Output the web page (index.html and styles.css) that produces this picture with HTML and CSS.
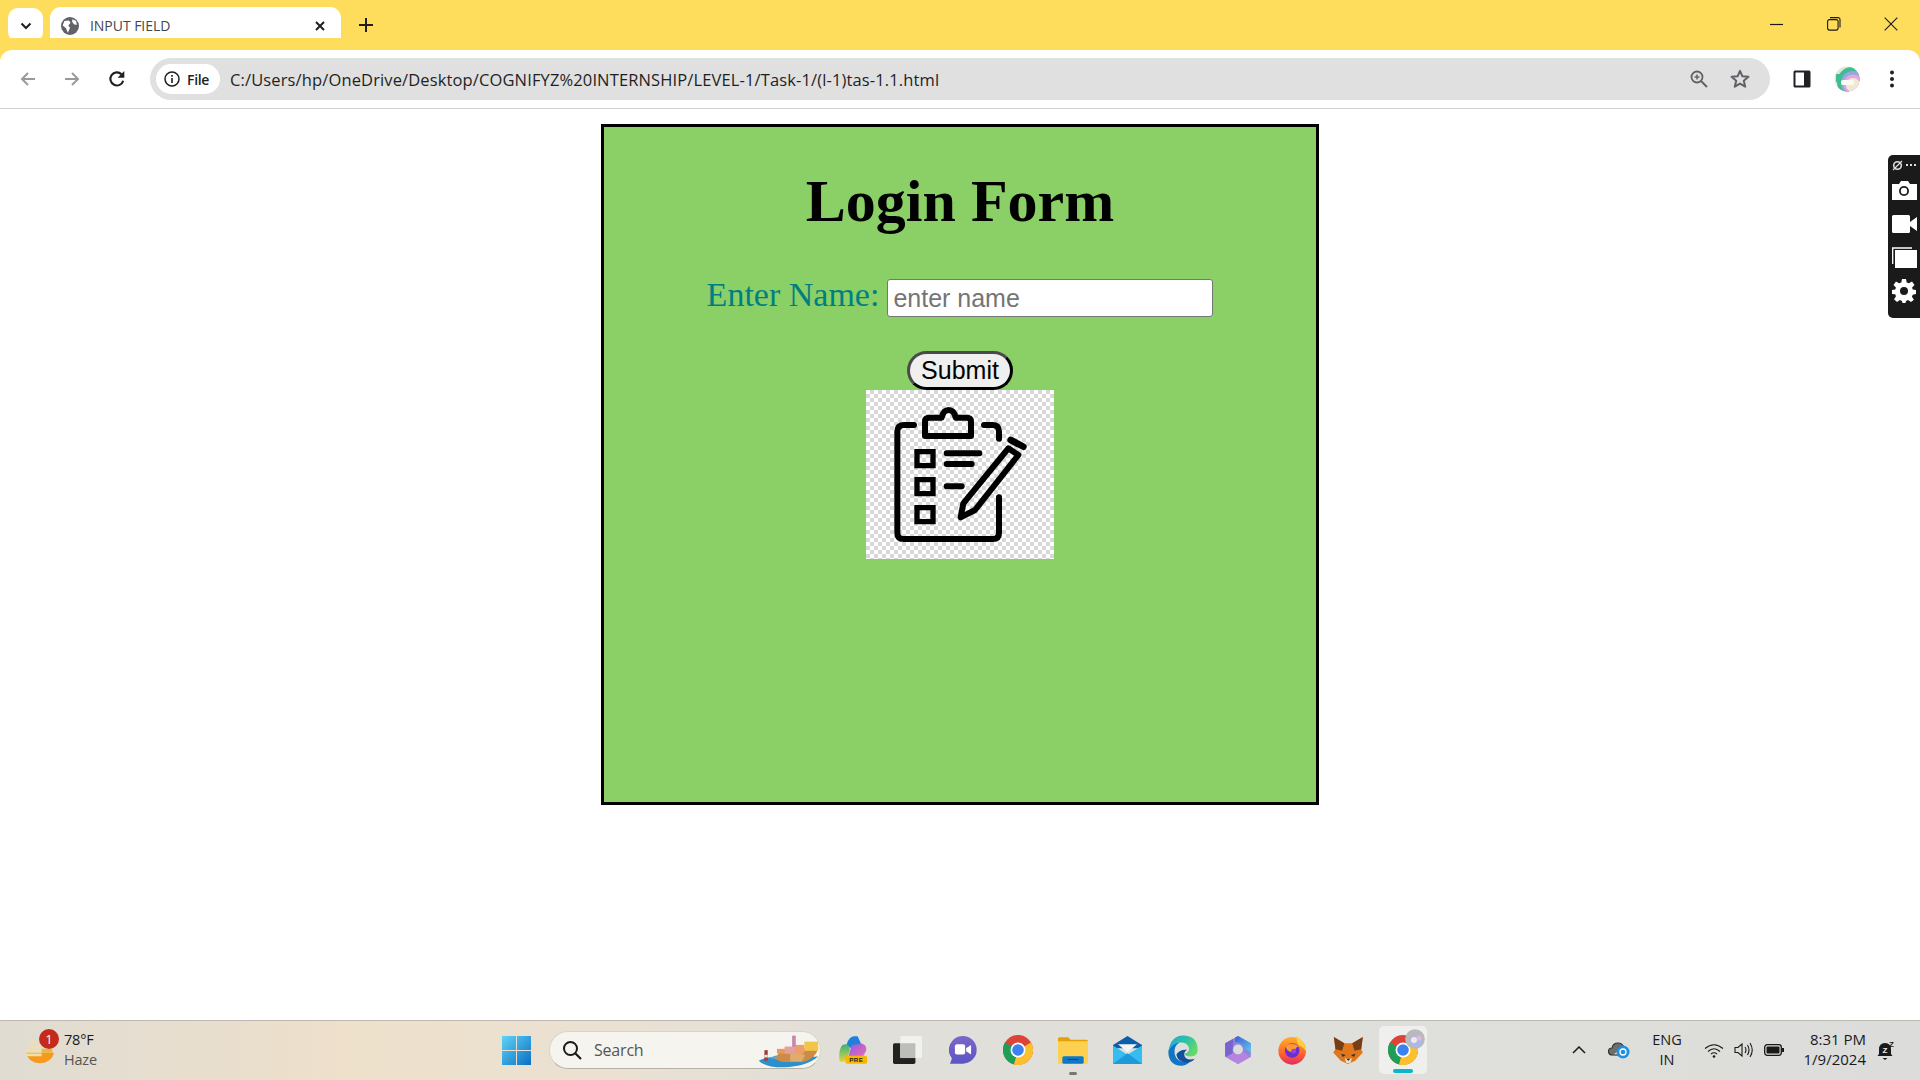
FILE: index.html
```html
<!DOCTYPE html>
<html lang="en">
<head>
<meta charset="utf-8">
<title>INPUT FIELD</title>
<link rel="stylesheet" href="styles.css">
</head>
<body>
<div class="screen">
  <header class="tabstrip">
    <button class="tab-search"><svg width="12" height="8" viewBox="0 0 12 8"><path d="M1.500 1.500 6 6l4.500-4.500" fill="none" stroke="#1f1f1f" stroke-width="2"/></svg></button>
    <div class="tab">
      <svg class="favicon" width="18" height="18" viewBox="0 0 16 16"><circle cx="8" cy="8" r="8" fill="#5f6368"/><path d="M3 3.500 7 3l1.500 2L6.500 7.500 8 9.500l-1 2.500-1 2L4.500 10 1.500 7.500zM10 2l3.500 1.500L14 7l-2.500-.5L10 4.500z" fill="#fff"/></svg>
      <span class="tab-title">INPUT FIELD</span>
      <svg class="tab-close" width="10" height="10" viewBox="0 0 10 10"><path d="M1 1l8 8M9 1l-8 8" stroke="#1f1f1f" stroke-width="2"/></svg>
    </div>
    <svg class="new-tab" width="14" height="14" viewBox="0 0 14 14"><path d="M7 0v14M0 7h14" stroke="#1f1f1f" stroke-width="2"/></svg>
    <div class="win-controls">
      <svg width="14" height="14" viewBox="0 0 14 14"><path d="M0 7.500h13" stroke="#1a1a1a" stroke-width="1.200"/></svg>
      <svg width="14" height="14" viewBox="0 0 14 14"><rect x=".6" y="2.600" width="10.500" height="10.500" rx="2" fill="none" stroke="#1a1a1a" stroke-width="1.100"/><path d="M3 .6h8a2 2 0 0 1 2 2v8" fill="none" stroke="#1a1a1a" stroke-width="1.100"/></svg>
      <svg width="14" height="14" viewBox="0 0 14 14"><path d="M.7.700l12.600 12.600M13.300.700.700 13.300" stroke="#1a1a1a" stroke-width="1.100"/></svg>
    </div>
  </header>

  <nav class="toolbar">
    <div class="nav-buttons">
      <svg width="16" height="16" viewBox="0 0 16 16"><path d="M15 8H2M8 2 2 8l6 6" fill="none" stroke="#9a9a9a" stroke-width="2"/></svg>
      <svg width="16" height="16" viewBox="0 0 16 16"><path d="M1 8h13M8 2l6 6-6 6" fill="none" stroke="#9a9a9a" stroke-width="2"/></svg>
      <svg width="18" height="18" viewBox="0 0 16 16"><path d="M13.500 9.500A5.800 5.800 0 1 1 12 3.800" fill="none" stroke="#1f1f1f" stroke-width="1.900"/><path d="M14.500 .8v6h-6z" fill="#1f1f1f"/></svg>
    </div>
    <div class="omnibox">
      <div class="chip">
        <svg width="16" height="16" viewBox="0 0 16 16"><circle cx="8" cy="8" r="7" fill="none" stroke="#1f1f1f" stroke-width="1.500"/><path d="M8 7v5M8 4v1.800" stroke="#1f1f1f" stroke-width="1.600"/></svg>
        <span class="chip-label">File</span>
      </div>
      <span class="url">C:/Users/hp/OneDrive/Desktop/COGNIFYZ%20INTERNSHIP/LEVEL-1/Task-1/(l-1)tas-1.1.html</span>
      <svg class="omni-zoom" width="18" height="18" viewBox="0 0 18 18"><circle cx="7" cy="7" r="5.500" fill="none" stroke="#5f6368" stroke-width="1.800"/><path d="M11 11l6 6" stroke="#5f6368" stroke-width="2"/><path d="M7 4.500v5M4.500 7h5" stroke="#5f6368" stroke-width="1.500"/></svg>
      <svg class="omni-star" width="20" height="20" viewBox="0 0 20 20"><path d="M10 1.800l2.400 5.500 6 .5-4.600 4 1.400 5.900-5.200-3.100-5.200 3.100 1.400-5.900-4.600-4 6-.5z" fill="none" stroke="#5f6368" stroke-width="2" stroke-linejoin="round"/></svg>
    </div>
    <div class="tool-right">
      <svg class="tool-panel" width="18" height="18" viewBox="0 0 18 18"><rect x=".5" y=".5" width="17" height="17" rx="1.500" fill="#202124"/><rect x="2.500" y="2.500" width="8.500" height="13" fill="#fff"/></svg>
      <svg class="tool-avatar" width="26" height="26" viewBox="0 0 26 26"><defs><clipPath id="av"><circle cx="13" cy="13" r="12.500"/></clipPath></defs><g clip-path="url(#av)"><rect width="26" height="26" fill="#e3e3e0"/><circle cx="18" cy="16" r="15" fill="#3fbe8e"/><circle cx="19" cy="17" r="12" fill="#9aa5e8"/><circle cx="19" cy="18" r="9.500" fill="#e6a8d8"/><circle cx="19" cy="19" r="7" fill="#f1ead2"/><rect x="7" y="14" width="13" height="5" rx="2" fill="#fbfaf5"/><rect x="2" y="8" width="4" height="8" fill="#3fbe8e"/></g></svg>
      <svg class="tool-menu" width="6" height="18" viewBox="0 0 6 18"><circle cx="3" cy="2.500" r="2" fill="#202124"/><circle cx="3" cy="9" r="2" fill="#202124"/><circle cx="3" cy="15.500" r="2" fill="#202124"/></svg>
    </div>
  </nav>

  <main class="page">
    <section class="card">
      <h1 class="card-title">Login Form</h1>
      <form class="login-form">
        <p class="name-row"><label class="name-label" for="name">Enter Name:</label><input class="name-input" id="name" type="text" placeholder="enter name"></p>
        <button class="submit" type="button">Submit</button>
        <div class="art">
          <svg class="art-icon" viewBox="78 150 564 507" fill="none" stroke="#000" stroke-width="18" stroke-linecap="round" stroke-linejoin="round">
            <path d="M222 255H192Q172 255 172 275V578Q172 597 192 597H458Q477 597 477 578V472"/>
            <path d="M432 255H458Q477 255 477 275V296"/>
            <path d="M255 288V245Q255 233 268 233H305Q310 210 326 210Q342 210 347 233H380Q393 233 393 245V288Z"/>
            <path d="M231 335H279V377H231ZM231 419H279V461H231ZM231 503H279V545H231Z" stroke-width="16" stroke-linecap="butt" stroke-linejoin="miter"/>
            <path d="M320 340H418M320 372H395M320 439H365"/>
            <path d="M362 532 370 490 505 325 535 345 405 510Z"/>
            <path d="M512 300 550 320" stroke-width="20"/>
          </svg>
        </div>
      </form>
    </section>
  </main>

  <aside class="capture-bar">
    <div class="capture-top">
      <svg width="11" height="11" viewBox="0 0 11 11"><circle cx="5.500" cy="5.500" r="3.800" fill="none" stroke="#ddd" stroke-width="1.600"/><path d="M1 10 10 1" stroke="#ddd" stroke-width="1.300"/></svg>
      <span class="capture-dots"></span>
    </div>
    <svg class="capture-camera" width="25" height="19" viewBox="0 0 25 19"><path d="M0 3h7l2-3h7l2 3h7v16H0z" fill="#fff"/><circle cx="12" cy="10" r="5" fill="#1a1a1a"/><circle cx="12" cy="10" r="3.200" fill="#fff"/></svg>
    <svg width="25" height="18" viewBox="0 0 25 18"><path d="M0 1.500Q0 0 1.500 0h15Q18 0 18 1.500v15q0 1.500-1.500 1.500h-15Q0 18 0 16.500zM18 7l7-5v14l-7-5z" fill="#fff"/></svg>
    <svg width="25" height="21" viewBox="0 0 25 21"><path d="M.7 17V1H20" fill="none" stroke="#fff" stroke-width="1.300"/><rect x="3" y="3" width="22" height="18" fill="#fff"/></svg>
    <svg class="capture-gear" width="24" height="24" viewBox="0 0 24 24"><path d="M10 0h4l.7 3.400 2.200.9L20 2.500 22.500 6l-2.400 2.400.6 2.100L24 11v4l-3.300.7-.8 2 2 3L19 23l-3-1.900-2 .8L13.500 24h-3l-.6-2.100-2-.8L5 23l-3-2.700 2-3-.8-2L0 15v-4l3.300-.5.600-2.100L1.500 6 4 2.500l3.100 1.800 2.200-.9zM12 8a4 4 0 1 0 0 8 4 4 0 0 0 0-8z" fill="#fff" fill-rule="evenodd"/></svg>
  </aside>

  <footer class="taskbar">
    <div class="weather">
      <div class="weather-icon">
        <svg width="30" height="27" viewBox="45 35 90 80"><path d="M48 82H132Q125 113 90 113Q55 113 48 82Z" fill="#f59a1e"/><path d="M58 46H78V52H58ZM55 60H98V67H55ZM46 73H128V80H46ZM46 84H95V92H46Z" fill="#f2dfa6"/><rect x="95" y="70" width="32" height="12" fill="#eeb53f"/></svg>
        <span class="weather-badge">1</span>
      </div>
      <div class="weather-text"><span class="temp">78°F</span><span class="haze">Haze</span></div>
    </div>

    <div class="center-icons">
      <svg class="win" width="29" height="29" viewBox="0 0 29 29"><defs><linearGradient id="wg" x1="0" y1="0" x2="1" y2="1"><stop offset="0" stop-color="#5fd3f8"/><stop offset="1" stop-color="#0a6fc4"/></linearGradient></defs><path d="M0 0h14v14H0zM15 0h14v14H15zM0 15h14v14H0zM15 15h14v14H15z" fill="url(#wg)"/></svg>
      <div class="search">
        <svg width="20" height="20" viewBox="0 0 20 20"><circle cx="8.500" cy="8.500" r="6.500" fill="none" stroke="#1a1a1a" stroke-width="2"/><path d="M13 13l6 6" stroke="#1a1a1a" stroke-width="2.200"/></svg>
        <span class="search-text">Search</span>
        <svg class="search-art" width="63" height="33" viewBox="50 30 190 100">
          <path d="M55 108Q80 95 120 95Q180 100 235 95Q200 125 130 128Q75 128 55 108Z" fill="#2f8fc9"/>
          <path d="M85 100Q110 88 120 92L110 104Z" fill="#5aa6d8"/>
          <path d="M105 102 120 76 170 70H235Q228 100 190 112H125Z" fill="#cc8c48"/>
          <path d="M150 88Q175 78 195 92L185 110H150Z" fill="#e0ab6b"/>
          <rect x="110" y="72" width="24" height="14" fill="#e79a5c"/>
          <rect x="133" y="65" width="32" height="22" fill="#e2a19c"/>
          <rect x="165" y="60" width="28" height="26" fill="#ee9d6d"/>
          <rect x="193" y="50" width="42" height="28" fill="#f2c54a"/>
          <rect x="156" y="32" width="11" height="34" fill="#c587ad"/>
          <rect x="72" y="76" width="10" height="32" fill="#9c3b3b"/>
          <rect x="72" y="90" width="10" height="8" fill="#e9e6dc"/>
        </svg>
      </div>
      <div class="dock">
        <span class="dock-item">
          <svg width="30" height="28" viewBox="25 35 90 85">
            <defs>
              <linearGradient id="cg1" x1="0" y1="0" x2="0" y2="1"><stop offset="0" stop-color="#37b27b"/><stop offset="1" stop-color="#e3d43f"/></linearGradient>
              <linearGradient id="cg2" x1="0" y1="0" x2="1" y2="1"><stop offset="0" stop-color="#8a5ce0"/><stop offset="1" stop-color="#f06cb8"/></linearGradient>
            </defs>
            <path d="M50 62Q58 36 74 36H84L98 66 64 72Z" fill="#1f7fdc"/>
            <path d="M28 98Q28 60 46 60Q62 60 60 80L52 104Q44 116 34 114Q28 112 28 98Z" fill="url(#cg1)"/>
            <path d="M66 62 96 58Q113 62 110 80L100 98H56Z" fill="url(#cg2)"/>
            <rect x="47" y="95" width="66" height="24" rx="5" fill="#f9b800"/>
            <text x="80" y="114" class="pre-text">PRE</text>
          </svg>
        </span>
        <span class="dock-item">
          <svg width="29" height="28" viewBox="190 33 88 85"><rect x="190" y="55" width="68" height="63" rx="5" fill="#222"/><rect x="212" y="33" width="66" height="67" rx="5" fill="#f1f1ee"/><rect x="212" y="55" width="46" height="45" fill="#bdbdba"/></svg>
        </span>
        <span class="dock-item">
          <svg width="28" height="28" viewBox="355 33 85 85"><defs><linearGradient id="mg" x1="0" y1="0" x2="0" y2="1"><stop offset="0" stop-color="#7d66c9"/><stop offset="1" stop-color="#5a55c6"/></linearGradient></defs><path d="M397 33a42 42 0 0 1 0 84H358l6-16a42 42 0 0 1 33-68Z" fill="url(#mg)"/><rect x="373" y="58" width="31" height="31" rx="6" fill="#fff"/><path d="M407 70l15-10v29l-15-10z" fill="#fff"/></svg>
        </span>
        <span class="dock-item"><svg width="30" height="30" viewBox="0 0 30 30"><use href="#chrome-mark"/></svg></span>
        <span class="dock-item dock-running">
          <svg width="30" height="27" viewBox="685 35 90 80"><path d="M685 40q0-5 5-5h25l8 8h47q5 0 5 5v15h-90z" fill="#e3a008"/><path d="M685 47h90v63q0 5-5 5h-80q-5 0-5-5z" fill="#fdd04f"/><rect x="698" y="92" width="64" height="23" rx="5" fill="#0d78c8"/><path d="M714 102h32" stroke="#0a3f7a" stroke-width="3"/></svg>
        </span>
        <span class="dock-item">
          <svg width="29" height="28" viewBox="40 33 88 85"><path d="M40 60 84 33l44 27v10H40z" fill="#0c5fa8"/><path d="M55 58H113L84 82Z" fill="#f4f4f4"/><path d="M40 62 84 90l44-28v56H40z" fill="#36bdf0"/><path d="M40 118 84 85l44 33z" fill="#1c9bdc"/></svg>
        </span>
        <span class="dock-item">
          <svg width="30" height="31" viewBox="205 28 90 92"><defs><linearGradient id="eg" x1="0" y1="0" x2="1" y2=".5"><stop offset="0" stop-color="#1fa7e0"/><stop offset=".6" stop-color="#2fc3a0"/><stop offset="1" stop-color="#62d96b"/></linearGradient></defs>
            <path d="M206 76Q214 29 250 29Q293 29 294 72Q294 92 272 92Q258 92 254 84Q270 80 268 66Q262 48 240 50Q216 52 206 76Z" fill="url(#eg)"/>
            <path d="M206 76Q216 52 240 50Q221 60 225 85Q232 113 271 108Q259 120 245 120Q206 118 206 76Z" fill="#0f75c4"/>
            <path d="M230 86Q240 70 262 72Q250 80 255 92Q262 105 285 99Q275 112 258 110Q234 108 230 86Z" fill="#12509e"/>
          </svg>
        </span>
        <span class="dock-item">
          <svg width="26" height="28" viewBox="375 33 78 85"><defs><linearGradient id="og" x1="0" y1="0" x2="1" y2="1"><stop offset="0" stop-color="#3a60d0"/><stop offset="1" stop-color="#5fc6f0"/></linearGradient></defs>
            <path d="M414 33 453 55V96L414 118 375 96V55Z" fill="#8d86dd"/>
            <path d="M405 38 414 33 453 55V82L433 70Q430 52 405 52Z" fill="url(#og)"/>
            <path d="M375 55 400 41 397 86 375 96Z" fill="#7a62d0"/>
            <path d="M397 86 433 84 453 96 414 118 380 98Z" fill="#b684e0"/>
            <circle cx="414" cy="74" r="15" fill="#dcdbd7"/>
          </svg>
        </span>
        <span class="dock-item">
          <svg width="29" height="29" viewBox="535 30 88 88"><defs><linearGradient id="fg" x1="0" y1="0" x2="0" y2="1"><stop offset="0" stop-color="#ffb02a"/><stop offset=".55" stop-color="#ff6a2a"/><stop offset="1" stop-color="#e62a64"/></linearGradient></defs>
            <circle cx="578" cy="75" r="42" fill="url(#fg)"/>
            <path d="M592 30Q622 55 622 80Q612 62 597 58Q590 45 592 30Z" fill="#ffce3a"/>
            <circle cx="578" cy="74" r="22" fill="#6a2fd0"/>
            <path d="M558 60Q578 46 598 62Q585 64 588 78Q570 82 562 72Z" fill="#ff9a2e"/>
            <circle cx="582" cy="76" r="7" fill="#8a4ae0"/>
          </svg>
        </span>
        <span class="dock-item">
          <svg width="30" height="27" viewBox="698 33 90 82">
            <path d="M700 33 732 52H756L788 33 783 70 788 80 765 105 743 115 721 105 698 80 705 70Z" fill="#e2761b"/>
            <path d="M700 33 732 52 725 75 705 70ZM788 33 756 52 763 75 783 70Z" fill="#763d16"/>
            <path d="M722 84 736 88 727 94ZM766 84 752 88 761 94Z" fill="#233447"/>
            <path d="M733 98H755L750 112H738Z" fill="#efdcc6"/>
            <path d="M738 99H750L744 105Z" fill="#161616"/>
          </svg>
        </span>
        <span class="dock-item dock-active">
          <svg width="30" height="30" viewBox="0 0 30 30"><defs><g id="chrome-mark"><circle cx="15" cy="15" r="15" fill="#db4437"/><path d="M15 15 2 7.500A15 15 0 0 0 11 29.500z" fill="#1e9e57"/><path d="M15 15 28 7.500A15 15 0 0 1 11 29.500z" fill="#fbc02d"/><circle cx="15" cy="15" r="7.500" fill="#fff"/><circle cx="15" cy="15" r="5.800" fill="#3b82f0"/></g></defs><use href="#chrome-mark"/></svg>
          <svg class="dock-avatar" width="20" height="20" viewBox="0 0 20 20"><circle cx="10" cy="10" r="9.800" fill="#b9bab7"/><circle cx="11" cy="12" r="6.500" fill="#aeb8e6"/><circle cx="9" cy="11" r="3" fill="#eceae4"/><circle cx="14" cy="9" r="2.500" fill="#e3b8dc"/></svg>
        </span>
      </div>
    </div>

    <div class="tray">
      <svg class="tray-chev" width="14" height="8" viewBox="0 0 14 8"><path d="M1 7l6-6 6 6" fill="none" stroke="#1a1a1a" stroke-width="1.500"/></svg>
      <span class="tray-cloud">
        <svg width="22" height="18" viewBox="0 0 22 18"><path d="M5 14H4a3.500 3.500 0 0 1 0-7q1-5 6-5 4 0 5.500 3.500" fill="#6e6e6c" stroke="#333" stroke-width="1.200"/><path d="M5 14h6" stroke="#333" stroke-width="1.200"/><circle cx="15" cy="11" r="6.500" fill="#1f8fe0"/><circle cx="15" cy="11" r="3" fill="none" stroke="#fff" stroke-width="1.300"/></svg>
      </span>
      <span class="lang"><span>ENG</span><span>IN</span></span>
      <svg class="tray-wifi" width="20" height="15" viewBox="0 0 20 15"><path d="M1 5.500Q10-2 19 5.500M4 8.500Q10 3 16 8.500M7 11q3-2.500 6 0" fill="none" stroke="#1a1a1a" stroke-width="1.100"/><circle cx="10" cy="13.500" r="1.300" fill="#1a1a1a"/></svg>
      <svg class="tray-vol" width="20" height="16" viewBox="0 0 20 16"><path d="M1 5.500h3L8 2v12l-4-3.500H1z" fill="none" stroke="#1a1a1a" stroke-width="1.100"/><path d="M11 5q2 3 0 6M13.500 3q3 5 0 10M16 1q4.500 7 0 14" fill="none" stroke="#1a1a1a" stroke-width="1.100"/></svg>
      <svg class="tray-batt" width="20" height="12" viewBox="0 0 20 12"><rect x=".7" y=".7" width="16.600" height="10.600" rx="2.500" fill="none" stroke="#1a1a1a" stroke-width="1.300"/><rect x="2.500" y="2.500" width="13" height="7" rx="1" fill="#1a1a1a"/><rect x="18" y="4" width="2" height="4" fill="#1a1a1a"/></svg>
      <span class="clock"><span>8:31 PM</span><span>1/9/2024</span></span>
      <span class="tray-bell">
        <svg width="20" height="20" viewBox="0 0 20 20"><path d="M9 3q6 0 6 6.500v4.500l1.500 2H1.500L3 14V9.500Q3 3 9 3z" fill="#1a1a1a"/><path d="M6.500 18h5L9 20z" fill="#1a1a1a"/><text x="9" y="13" class="zz">Z</text><text x="15.500" y="7" class="zz zz-dark">Z</text></svg>
      </span>
    </div>
  </footer>
</div>
</body>
</html>
```
FILE: styles.css
```css
* { box-sizing: border-box; }
html, body { margin: 0; padding: 0; }
body { background: #fff; font-family: "Open Sans", "Liberation Sans", sans-serif; overflow: hidden; }
.screen { position: relative; width: 1920px; height: 1080px; display: flex; flex-direction: column; }

.tabstrip { height: 50px; flex: none; background: #ffdd5c; display: flex; align-items: flex-start; padding-left: 8px; }
.tab-search { width: 35px; height: 34px; margin-top: 8px; border: 0; border-radius: 10px; background: #fff; padding: 2px 0 0; display: flex; align-items: center; justify-content: center; }
.tab { position: relative; width: 291px; height: 43px; margin: 7px 0 0 7px; background: #fff; border-radius: 11px 11px 0 0; display: flex; align-items: center; padding: 0 16px 6px 11px; }
.tab::before, .tab::after { content: ""; position: absolute; bottom: 0; width: 12px; height: 12px; }
.tab::before { left: -12px; background: radial-gradient(circle at 0 0, #ffdd5c 11.500px, #fff 12px); }
.tab::after { right: -12px; background: radial-gradient(circle at 100% 0, #ffdd5c 11.500px, #fff 12px); }
.favicon { flex: none; }
.tab-title { margin-left: 11px; flex: 1; font-size: 14px; color: #44474a; letter-spacing: -.05px; }
.tab-close { flex: none; }
.new-tab { margin: 18px 0 0 18px; flex: none; }
.win-controls { margin-left: auto; margin-top: 17px; display: flex; gap: 43px; padding-right: 22px; }

.toolbar { height: 59px; flex: none; background: #fff; border-bottom: 1px solid #d0d0d0; border-radius: 12px 12px 0 0; display: flex; align-items: center; position: relative; box-shadow: 0 -12px 0 #ffdd5c; }
.nav-buttons { width: 150px; flex: none; display: flex; align-items: center; gap: 28px; padding-left: 20px; }
.omnibox { width: 1620px; height: 42px; flex: none; background: #e0e0e0; border-radius: 21px; display: flex; align-items: center; padding: 0 0 0 6px; }
.chip { width: 64px; height: 30px; background: #fff; border-radius: 15px; display: flex; align-items: center; gap: 7px; padding-left: 8px; flex: none; }
.chip-label { font-size: 14px; font-weight: 600; color: #1f1f1f; letter-spacing: -.3px; }
.url { margin-left: 10px; flex: 1; font-size: 16.500px; color: #1f1f1f; letter-spacing: .13px; white-space: nowrap; }
.omni-zoom { flex: none; margin-right: 22px; }
.omni-star { flex: none; margin-right: 20px; }
.tool-right { flex: 1; display: flex; align-items: center; padding-left: 23px; }
.tool-avatar { margin-left: 23px; }
.tool-menu { margin-left: 29px; }

.page { flex: 1; min-height: 0; background: #fff; padding-top: 15px; }
.card { width: 718px; height: 681px; margin: 0 auto; background: #8bcf67; border: 3px solid #000; text-align: center; padding-top: 39px; font-family: "Liberation Serif", "Times New Roman", serif; }
.card-title { margin: 0; font-size: 60px; line-height: 70px; font-weight: 700; color: #000; }
.login-form { display: block; }
.name-row { margin: 43px 0 0; height: 38px; display: flex; justify-content: center; align-items: flex-start; gap: 8px; }
.name-label { color: #007f80; font-size: 34px; line-height: 32px; }
.name-input { width: 326px; height: 38px; font: 25px "Liberation Sans", Arial, sans-serif; padding: 1px 5px; border: 1px solid #767676; border-radius: 3px; background: #fff; }
.name-input::placeholder { color: #757575; }
.submit { display: block; width: 106px; height: 39px; margin: 34px auto 0; padding: 0; font: 25px "Liberation Sans", Arial, sans-serif; color: #000; background: #efefef; border: 3px solid #000; border-color: #4a4a4a #000 #000 #4a4a4a; border-radius: 20px; }
.art { width: 188px; height: 169px; margin: 0 auto; background-color: #fff; background-image: conic-gradient(#d8d8d8 25%, #fff 0 50%, #d8d8d8 0 75%, #fff 0); background-size: 8px 8px; }
.art-icon { display: block; width: 188px; height: 169px; }

.capture-bar { position: absolute; right: 0; top: 155px; width: 32px; height: 163px; background: #1a1a1a; border-radius: 5px 0 0 5px; display: flex; flex-direction: column; align-items: center; gap: 14px; padding-top: 3px; }
.capture-top { height: 14px; margin-bottom: -5px; display: flex; align-items: center; gap: 3px; }
.capture-dots { width: 10px; height: 2px; background-image: linear-gradient(90deg, #ddd 2px, transparent 2px); background-size: 4px 2px; }
.capture-camera { margin-bottom: 1px; }
.capture-gear { margin-top: -3px; }

.taskbar { height: 60px; flex: none; display: flex; align-items: center; padding-bottom: 1px; border-top: 1px solid #bdb9b2; background: linear-gradient(90deg, #e0dcd2 0%, #eee0cb 18%, #ebe1d1 30%, #e1dfda 45%, #dfdfdb 70%, #dcdcda 100%); position: relative; }
.weather { width: 489px; flex: none; display: flex; align-items: center; padding-left: 25px; height: 100%; }
.weather-icon { position: relative; width: 30px; height: 27px; flex: none; }
.weather-badge { position: absolute; left: 14px; top: -8px; width: 20px; height: 20px; border-radius: 50%; background: #c42b1c; color: #fff; font-size: 13px; line-height: 20px; text-align: center; }
.weather-text { display: flex; flex-direction: column; margin-left: 9px; font-size: 14.500px; line-height: 20px; letter-spacing: -.2px; }
.temp { color: #1a1a1a; }
.haze { color: #555; }

.center-icons { display: flex; align-items: center; flex: none; }
.win { margin: 0 18px 0 13px; flex: none; }
.search { width: 272px; height: 38px; flex: none; border-radius: 19px; background: #f6f4ee; border: 1px solid #d8d4c8; border-bottom-color: #b5b1a6; display: flex; align-items: center; padding-left: 12px; position: relative; }
.search-text { margin-left: 12px; font-size: 16px; color: #555; letter-spacing: -.2px; }
.search-art { position: absolute; right: 0; top: 3px; }
.dock { display: flex; align-items: center; margin-left: 4px; }
.dock-item { position: relative; width: 55px; height: 48px; flex: none; display: flex; align-items: center; justify-content: center; }
.dock-running::after, .dock-active::after { content: ""; position: absolute; left: 50%; transform: translateX(-50%); bottom: 0; border-radius: 2px; }
.dock-running::after { width: 8px; height: 3px; background: #777; bottom: -1px; }
.dock-active { width: 48px; margin-left: 4px; border-radius: 5px; background: #efefed; }
.dock-active::after { width: 20px; height: 4px; background: #0db5c6; bottom: 1px; }
.dock-avatar { position: absolute; right: 2px; top: 3px; }
.pre-text { font: 700 19px "Liberation Sans", sans-serif; fill: #222; text-anchor: middle; letter-spacing: 1px; }

.tray { margin-left: auto; display: flex; align-items: center; height: 100%; flex: none; position: relative; width: 350px; padding-left: 2px; }
.tray-chev { flex: none; }
.tray-cloud { margin-left: 22px; display: flex; flex: none; }
.lang { width: 34px; margin-left: 20px; display: flex; flex-direction: column; align-items: center; font-size: 14.500px; line-height: 20px; color: #1a1a1a; flex: none; }
.tray-wifi { margin-left: 20px; flex: none; }
.tray-vol { margin-left: 10px; flex: none; }
.tray-batt { margin-left: 10px; flex: none; }
.clock { width: 82px; margin-top: -2px; display: flex; flex-direction: column; align-items: flex-end; font-size: 15px; line-height: 20px; color: #1a1a1a; flex: none; }
.tray-bell { margin-left: 10px; display: flex; flex: none; }
.zz { font: 700 8px "Liberation Sans", sans-serif; fill: #eee; text-anchor: middle; }
.zz-dark { fill: #1a1a1a; }
```
